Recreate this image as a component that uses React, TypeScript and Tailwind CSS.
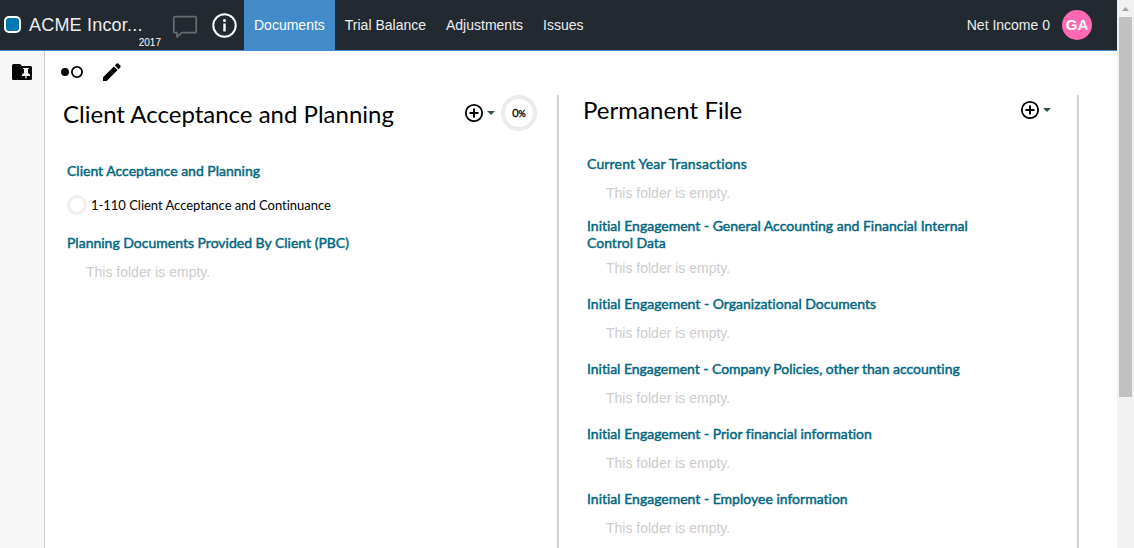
import React from "react";

const emptyText = "This folder is empty.";

function SectionTitle({ children, className = "" }: { children: React.ReactNode; className?: string }) {
  return (
    <h3 className={`flex min-h-[25px] w-[400px] items-center font-['Lato',sans-serif] text-[14px] leading-[17px] font-normal text-[#006680] [-webkit-text-stroke:0.45px_#006680] [font-variant-ligatures:none] ${className}`}>
      <span>{children}</span>
    </h3>
  );
}

function EmptyFolder({ className = "leading-[34px]" }: { className?: string }) {
  return (
    <p className={`h-10 pl-[19px] text-[14px] text-[#cccccc] ${className}`}>{emptyText}</p>
  );
}

function AddButton() {
  return (
    <button className="flex items-center gap-[3px]" aria-label="Add">
      <svg width="20" height="20" viewBox="0 0 20 20" fill="none" stroke="#000">
        <circle cx="10" cy="10" r="8.2" strokeWidth="1.8" />
        <path d="M10 5.5v9M5.5 10h9" strokeWidth="2" />
      </svg>
      <svg width="8" height="4" viewBox="0 0 8 4" fill="#2f4f4f">
        <path d="M0 0h8L4 4z" />
      </svg>
    </button>
  );
}

const folders = [
  { name: "Current Year Transactions", title: "-mt-px mb-px tracking-[0.16px]", empty: "leading-8" },
  { name: "Initial Engagement - General Accounting and Financial Internal Control Data" },
  { name: "Initial Engagement - Organizational Documents" },
  { name: "Initial Engagement - Company Policies, other than accounting", title: "tracking-[-0.035px]" },
  { name: "Initial Engagement - Prior financial information" },
  { name: "Initial Engagement - Employee information" },
];

const tabs = ["Trial Balance", "Adjustments", "Issues"];

function Header() {
  return (
    <header className="flex h-[51px] shrink-0 border-b border-[#428bca] bg-[#232931] text-[#eeeeee]">
      <div className="flex w-[244px] shrink-0">
        <div className="mt-4 ml-1 h-[17px] w-[17px] shrink-0 rounded-[5px] border-2 border-white bg-[#0077ae]" />
        <div className="ml-2 flex w-[132px] flex-col pt-[13px]">
          <span className="text-[18px] leading-6 tracking-[0.2px] whitespace-nowrap">ACME Incor...</span>
          <span className="text-right text-[10px] leading-[11px] text-white">2017</span>
        </div>
        <svg className="mt-[14px] ml-[11px] shrink-0" width="26" height="26" viewBox="0 0 26 26" fill="none" stroke="#666a6d" strokeWidth="1.8" strokeLinejoin="round">
          <path d="M3 2.6h20a1.2 1.2 0 0 1 1.2 1.2v13.6a1.2 1.2 0 0 1-1.2 1.2H9.8L5 23v-4.4H3a1.2 1.2 0 0 1-1.2-1.2V3.800A1.200 1.200 0 0 1 3 2.600z" />
        </svg>
        <svg className="mt-[12px] ml-[13px] shrink-0" width="26" height="26" viewBox="0 0 26 26" fill="none" stroke="#fff">
          <circle cx="13.500" cy="13.500" r="11.2" strokeWidth="2" />
          <path d="M13.500 11.500v8" strokeWidth="2.400" />
          <circle cx="13.500" cy="8.500" r="1.500" fill="#fff" stroke="none" />
        </svg>
      </div>
      <nav className="flex text-[14px] leading-[50px]">
        <a className="bg-[#428bca] px-[10px] text-white">Documents</a>
        {tabs.map((t) => (
          <a key={t} className="px-[10px]">{t}</a>
        ))}
      </nav>
      <div className="ml-auto flex items-center gap-3 pr-[25px] text-[14px]">
        <span>Net Income 0</span>
        <span className="flex h-[30px] w-[30px] items-center justify-center rounded-full bg-[#ff69b4] text-[15px] font-bold text-white">GA</span>
      </div>
    </header>
  );
}

export default function App() {
  return (
    <div className="flex h-[548px] w-[1134px] overflow-hidden bg-white font-['Liberation_Sans',Arial,sans-serif]">
      <div className="flex w-[1117px] flex-col">
        <Header />
        <div className="flex min-h-0 flex-1">
          <aside className="w-[45px] shrink-0 border-r border-[#cccccc] bg-[#f7f7f7] pt-3 pl-3">
            <svg width="20" height="17" viewBox="0 0 20 17">
              <path d="M1.500 1h6.500l2 2h8.500a1.500 1.500 0 0 1 1.500 1.500v11a1.500 1.500 0 0 1-1.500 1.500h-17a1.500 1.500 0 0 1-1.500-1.500v-13a1.500 1.500 0 0 1 1.500-1.500z" fill="#000" />
              <path d="M11 5h6v1h-1v4l2 1.500V13h-3.400v2.500h-1.200V13H10v-1.500l2-1.500V6h-1z" fill="#f7f7f7" />
            </svg>
          </aside>
          <main className="flex min-w-0 flex-1 flex-col">
            <div className="flex h-11 shrink-0 pt-[11px] pl-4">
              <svg width="23" height="20" viewBox="0 0 23 20">
                <circle cx="4" cy="10" r="4" fill="#000" />
                <circle cx="16" cy="10" r="5.100" fill="none" stroke="#000" strokeWidth="1.800" />
              </svg>
              <svg className="ml-[18px]" width="20" height="20" viewBox="0 0 20 20">
                <path d="M1 15.300L11.900 4.400l3.700 3.700L4.700 19H1zM12.800 3.500l1.900-1.900a1.100 1.100 0 0 1 1.500 0l2.200 2.200a1.100 1.100 0 0 1 0 1.500l-1.900 1.900z" fill="#000" />
              </svg>
            </div>
            <div className="flex min-h-0 flex-1">
              <section className="w-[514px] shrink-0 border-r-2 border-[#d0d0d0] pl-[18px]">
                <div className="flex h-[63px] items-start">
                  <h2 className="w-[401px] pt-[3px] font-['Lato',sans-serif] text-[24px] leading-8 whitespace-nowrap text-black">Client Acceptance and Planning</h2>
                  <div className="flex items-center gap-[6px]">
                    <AddButton />
                    <div className="flex h-9 w-9 items-center justify-center rounded-full border-4 border-[#ebebeb] font-['Lato',sans-serif] text-black">
                      <span className="text-[11px] [-webkit-text-stroke:0.3px_#000]">0<span className="text-[9px]">%</span></span>
                    </div>
                  </div>
                </div>
                <div className="pl-1">
                  <SectionTitle>Client Acceptance and Planning</SectionTitle>
                  <div className="flex h-[47px] items-center gap-1 pb-[3px] font-['Lato',sans-serif] text-[13px] text-black">
                    <span className="h-5 w-5 rounded-full border-3 border-[#f0f0f0]" />
                    <span className="pt-px tracking-[-0.02px] [font-variant-ligatures:none]">1-110 Client Acceptance and Continuance</span>
                  </div>
                  <SectionTitle>Planning Documents Provided By Client (PBC)</SectionTitle>
                  <EmptyFolder />
                </div>
              </section>
              <section className="w-[520px] shrink-0 overflow-hidden border-r-2 border-[#d0d0d0] pl-6">
                <div className="flex h-[57px] items-start">
                  <h2 className="-mt-px w-[437px] font-['Lato',sans-serif] text-[24px] leading-8 tracking-[0.05px] text-black">Permanent File</h2>
                  <div className="pt-[5px]"><AddButton /></div>
                </div>
                <div className="pl-1">
                  {folders.map((f) => (
                    <div key={f.name}>
                      <SectionTitle className={f.title}>{f.name}</SectionTitle>
                      <EmptyFolder className={f.empty} />
                    </div>
                  ))}
                </div>
              </section>
            </div>
          </main>
        </div>
      </div>
      <div className="flex w-[17px] shrink-0 flex-col items-center bg-[#f1f1f1]">
        <svg className="shrink-0" width="17" height="17" viewBox="0 0 17 17">
          <path d="M5 11h7L8.500 7z" fill="#a3a3a3" />
        </svg>
        <div className="h-[380px] w-[13px] shrink-0 bg-[#c1c1c1]" />
      </div>
    </div>
  );
}
